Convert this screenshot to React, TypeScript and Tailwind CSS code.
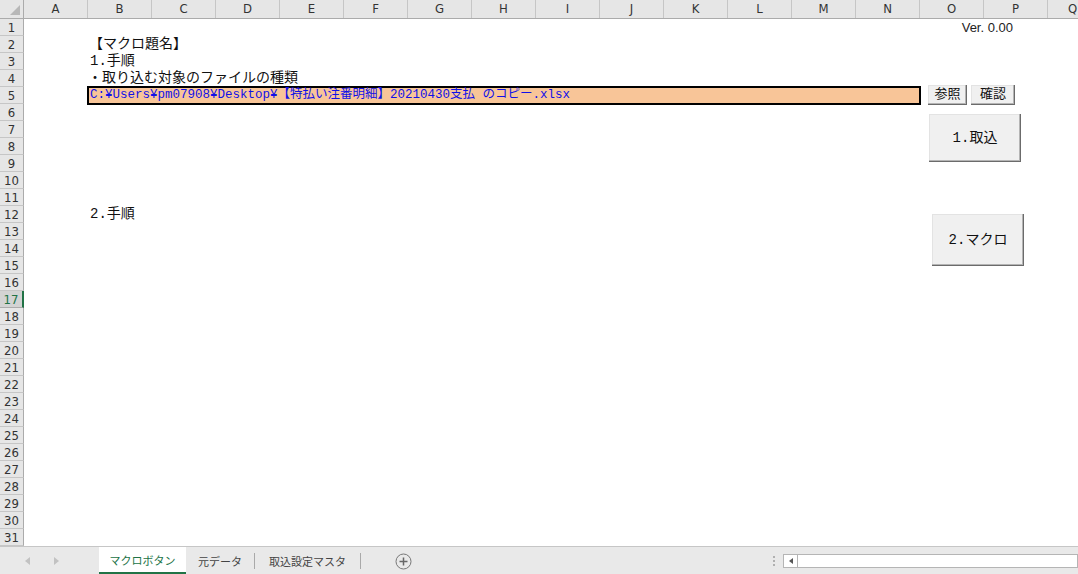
import React from "react";

const cols = ["A", "B", "C", "D", "E", "F", "G", "H", "I", "J", "K", "L", "M", "N", "O", "P"];
const rows = Array.from({ length: 31 }, (_, i) => i + 1);

const headFont = { fontFamily: '"Liberation Sans Narrow", "DejaVu Sans Condensed", "Liberation Sans", sans-serif' };
const gothic = { fontFamily: '"Liberation Mono", "Noto Sans CJK JP", monospace' };

function FormButton({ label, className }: { label: string; className: string }) {
  return (
    <div
      className={`flex items-center justify-center bg-[#f0f0f0] text-[#111] shadow-[inset_-1px_-1px_0_#6b6b6b,inset_-2px_-2px_0_#b4b4b4,inset_1px_1px_0_#e3e3e3] ${className}`}
      style={gothic}
    >
      {label}
    </div>
  );
}

function RowContent({ n }: { n: number }) {
  if (n === 1)
    return (
      <div className="flex flex-1 justify-end pr-[65px] text-[13px] text-[#222]" style={{ fontFamily: '"Liberation Sans", sans-serif' }}>
        Ver. 0.00
      </div>
    );
  if (n === 2) return <div className="pl-[65px] text-[14px] text-[#111]" style={gothic}>【マクロ題名】</div>;
  if (n === 3) return <div className="pl-[66px] text-[14px] text-[#111]" style={gothic}>1.手順</div>;
  if (n === 4) return <div className="pl-[64px] text-[14px] text-[#111]" style={gothic}>・取り込む対象のファイルの種類</div>;
  if (n === 5)
    return (
      <div className="flex items-start pl-[63px]">
        <div className="-mt-px flex h-[19px] w-[834px] items-center border-2 border-black bg-[#f8c598] pl-px text-[12.5px] leading-none text-[#1010e8]" style={gothic}>
          C:¥Users¥pm07908¥Desktop¥【特払い注番明細】20210430支払 のコピー.xlsx
        </div>
        <FormButton label="参照" className="-mt-[2px] ml-[7px] h-[20px] w-[39px] text-[13px]" />
        <FormButton label="確認" className="-mt-[2px] ml-[4px] h-[20px] w-[44px] text-[13px]" />
      </div>
    );
  if (n === 12) return <div className="pl-[66px] text-[14px] text-[#111]" style={gothic}>2.手順</div>;
  return null;
}

export default function App() {
  return (
    <div className="flex h-[574px] w-[1078px] flex-col overflow-hidden bg-white">
      {/* column header */}
      <div className="flex h-[19px] shrink-0 border-b border-[#ababab] bg-[#e6e6e6] text-[13px] text-[#333]" style={headFont}>
        <div className="relative w-[24px] shrink-0 border-r border-[#ababab]">
          <div className="absolute bottom-[3px] right-[3px] h-0 w-0 border-b-[10px] border-l-[10px] border-b-[#b8b8b8] border-l-transparent" />
        </div>
        {cols.map((c) => (
          <div key={c} className="flex w-[64px] shrink-0 items-center justify-center border-r border-[#c6c6c6]">
            {c}
          </div>
        ))}
        <div className="flex w-[30px] shrink-0 items-center pl-[20px]">Q</div>
      </div>

      {/* sheet body */}
      <div className="relative flex flex-1 flex-col">
        {rows.map((n) => (
          <div key={n} className="flex h-[17px] shrink-0 items-center">
            <div
              className={`flex h-full w-[24px] shrink-0 items-center justify-center border-b text-[13px] leading-none ${
                n === 17
                  ? "border-r-2 border-b-[#ababab] border-r-[#217346] bg-[#d3d3d3] text-[#217346]"
                  : "border-r border-b-[#c6c6c6] border-r-[#ababab] bg-[#e6e6e6] text-[#333]"
              }`}
              style={headFont}
            >
              {n}
            </div>
            <RowContent n={n} />
          </div>
        ))}

        <FormButton label="1.取込" className="absolute left-[929px] top-[95px] h-[48px] w-[92px] text-[14px]" />
        <FormButton label="2.マクロ" className="absolute left-[932px] top-[195px] h-[52px] w-[92px] text-[14px]" />
      </div>

      {/* sheet tabs */}
      <div className="flex h-[29px] shrink-0 items-stretch border-t border-[#c6c6c6] bg-[#e9e9e9] text-[11px] text-[#444]" style={{ fontFamily: '"Noto Sans CJK JP", sans-serif' }}>
        <div className="flex w-[99px] shrink-0 items-center">
          <div className="ml-[25px] h-0 w-0 border-y-[4px] border-r-[5px] border-y-transparent border-r-[#c2c2c2]" />
          <div className="ml-[24px] h-0 w-0 border-y-[4px] border-l-[5px] border-y-transparent border-l-[#c2c2c2]" />
        </div>
        <div className="flex w-[87px] shrink-0 items-center justify-center border-b-[3px] border-[#217346] bg-white pt-px text-[#217346]">
          マクロボタン
        </div>
        <div className="flex w-[68px] shrink-0 items-center justify-center">元データ</div>
        <div className="my-[6px] w-px bg-[#a9a9a9]" />
        <div className="flex w-[105px] shrink-0 items-center justify-center">取込設定マスタ</div>
        <div className="my-[6px] w-px bg-[#a9a9a9]" />
        <div className="flex w-[84px] shrink-0 items-center justify-center">
          <svg width="17" height="17" viewBox="0 0 17 17">
            <circle cx="8.5" cy="8.5" r="7.5" fill="none" stroke="#777" strokeWidth="1" />
            <path d="M8.5 4.5v8M4.5 8.5h8" stroke="#666" strokeWidth="1.5" />
          </svg>
        </div>
        <div className="flex-1" />
        <div className="flex w-[18px] shrink-0 flex-col items-center justify-center gap-[2px]">
          <div className="h-[2px] w-[2px] bg-[#b0b0b0]" />
          <div className="h-[2px] w-[2px] bg-[#b0b0b0]" />
          <div className="h-[2px] w-[2px] bg-[#b0b0b0]" />
        </div>
        <div className="flex w-[295px] shrink-0 items-center">
          <div className="flex h-[14px] w-full border border-[#b5b5b5] bg-white">
            <div className="flex w-[14px] items-center justify-center border-r border-[#b5b5b5]">
              <div className="h-0 w-0 border-y-[3px] border-r-[4px] border-y-transparent border-r-[#555]" />
            </div>
          </div>
        </div>
      </div>
    </div>
  );
}
